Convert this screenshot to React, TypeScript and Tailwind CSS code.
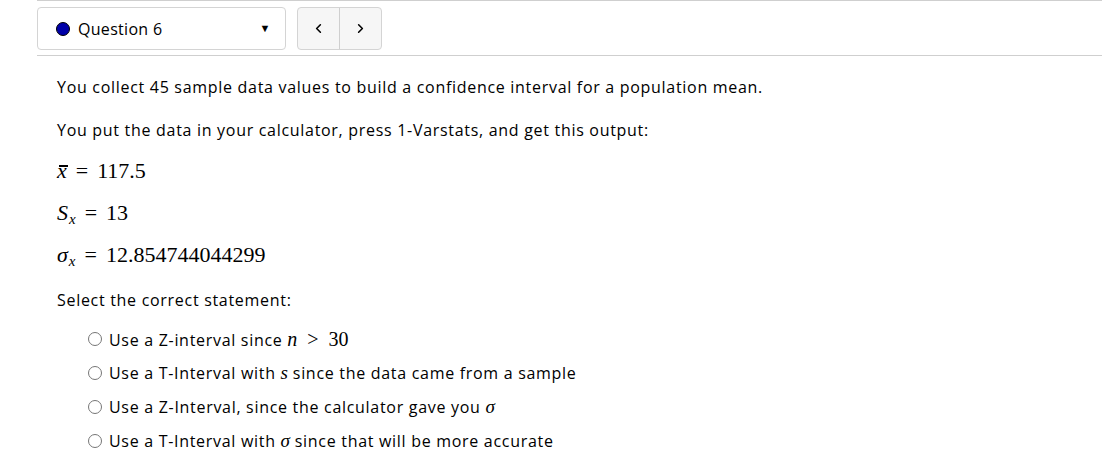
import React from 'react';
import { ChevronLeft, ChevronRight } from 'lucide-react';

const Math: React.FC<{ children: React.ReactNode; className?: string }> = ({ children, className }) => (
  <span className={`font-['Liberation_Serif',serif] tracking-normal ${className ?? 'text-[19px]'}`}>{children}</span>
);

const Eq = () => <span className="mx-[9px]">=</span>;

const Sub: React.FC<{ children: React.ReactNode }> = ({ children }) => (
  <span className="text-[15px] italic relative top-[4px] ml-[1px]">{children}</span>
);

const Radio: React.FC<{ children: React.ReactNode }> = ({ children }) => (
  <label className="flex items-center gap-[7px] h-[34px]">
    <span className="w-[14px] h-[14px] rounded-full border border-[#767676] bg-white shrink-0" />
    <span>{children}</span>
  </label>
);

export default function App() {
  const options = [
    <>Use a Z-interval since <Math className="text-[20px]"><i>n</i><span className="mx-[10px]">&gt;</span>30</Math></>,
    <>Use a T-Interval with <Math><i>s</i></Math> since the data came from a sample</>,
    <>Use a Z-Interval, since the calculator gave you <Math><i>σ</i></Math></>,
    <>Use a T-Interval with <Math><i>σ</i></Math> since that will be more accurate</>,
  ];

  return (
    <div className="w-[1102px] h-[470px] bg-white text-[#000] font-['Open_Sans',sans-serif] text-[16px] tracking-[0.7px] overflow-hidden">
      {/* Question nav */}
      <div className="ml-[37px] border-t border-b border-[#cfcfcf] h-[56px] flex items-start pt-[6px]">
        <div className="w-[249px] h-[43px] border border-[#d4d4d4] rounded-[4px] flex items-center pl-[18px] pr-[14px]">
          <span className="w-[14px] h-[14px] rounded-full bg-[#0000a8] border border-black" />
          <span className="ml-[8px] text-[16px] tracking-[0.3px]">Question 6</span>
          <span className="ml-auto text-[11px]">▼</span>
        </div>
        <div className="ml-[11px] h-[43px] w-[85px] flex border border-[#d4d4d4] rounded-[4px] bg-[#f6f6f6]">
          <button className="w-[42px] border-r border-[#cfcfcf] flex items-center justify-center">
            <ChevronLeft size={15} strokeWidth={2.5} />
          </button>
          <button className="flex-1 flex items-center justify-center">
            <ChevronRight size={15} strokeWidth={2.5} />
          </button>
        </div>
      </div>

      {/* Question body */}
      <div className="pl-[57px] pt-[20px]">
        <p className="h-[22px] leading-[22px]">You collect 45 sample data values to build a confidence interval for a population mean.</p>
        <p className="mt-[21px] h-[22px] leading-[22px]">You put the data in your calculator, press 1-Varstats, and get this output:</p>
        <p className="mt-[18px] h-[24px] leading-[24px]">
          <Math className="text-[22px]">
            <i className="inline-block relative">
              x<span className="absolute left-[2px] top-[6px] w-[9px] h-[1.5px] bg-black" />
            </i>
            <Eq />117.5
          </Math>
        </p>
        <p className="mt-[18px] h-[24px] leading-[24px]">
          <Math className="text-[22px]"><i>S</i><Sub>x</Sub><Eq />13</Math>
        </p>
        <p className="mt-[18px] h-[24px] leading-[24px]">
          <Math className="text-[22px]"><i>σ</i><Sub>x</Sub><Eq />12.854744044299</Math>
        </p>
        <p className="mt-[22px] h-[22px] leading-[22px]">Select the correct statement:</p>
        <div className="mt-[11px] pl-[31px]">
          {options.map((o, i) => (
            <Radio key={i}>{o}</Radio>
          ))}
        </div>
      </div>
    </div>
  );
}
